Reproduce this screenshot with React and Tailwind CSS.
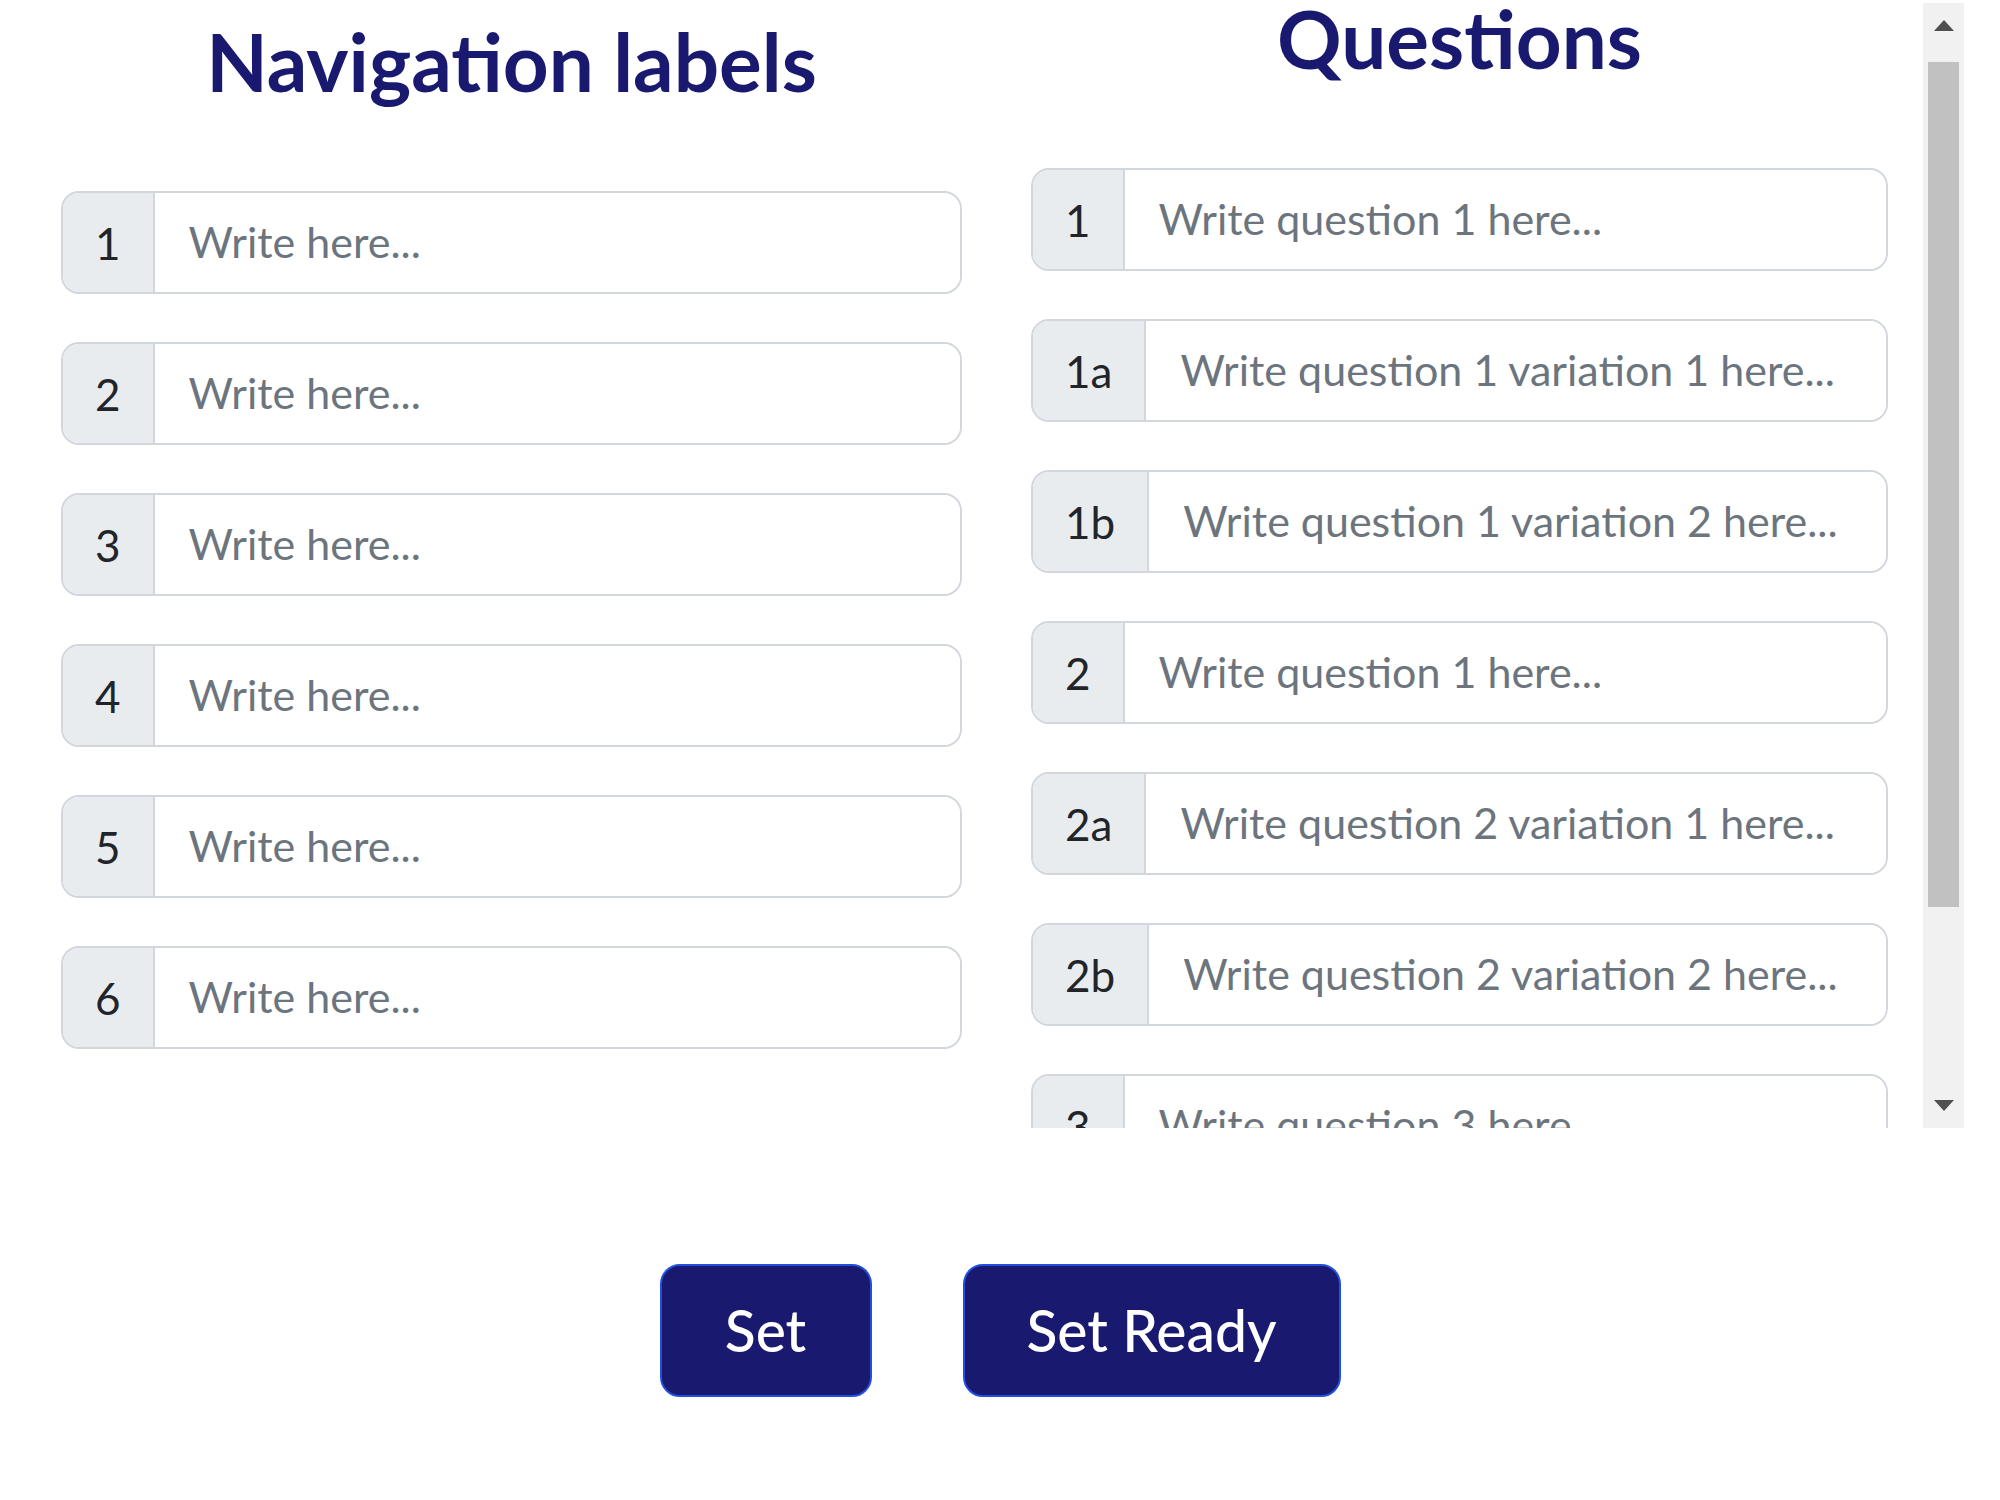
import React, { useEffect, useRef } from "react";

const NAV_ROWS = ["1", "2", "3", "4", "5", "6"];

const QUESTION_ROWS = [
  { label: "1", placeholder: "Write question 1 here..." },
  { label: "1a", placeholder: "Write question 1 variation 1 here..." },
  { label: "1b", placeholder: "Write question 1 variation 2 here..." },
  { label: "2", placeholder: "Write question 1 here..." },
  { label: "2a", placeholder: "Write question 2 variation 1 here..." },
  { label: "2b", placeholder: "Write question 2 variation 2 here..." },
  { label: "3", placeholder: "Write question 3 here..." },
  { label: "3a", placeholder: "Write question 3 variation 1 here..." },
  { label: "3b", placeholder: "Write question 3 variation 2 here..." },
];

function InputRow({ label, placeholder }) {
  return (
    <div className="flex h-[103px] shrink-0 overflow-hidden rounded-[18px] border-2 border-[#d2d7dd] bg-white">
      <span className="flex items-center border-r-2 border-[#d2d7dd] bg-[#e9ecef] px-[32px] text-[44px] text-[#212529]">
        {label}
      </span>
      <input
        type="text"
        placeholder={placeholder}
        className="min-w-0 flex-1 bg-white pl-[34px] pr-[20px] text-[43px] text-[#212529] outline-none placeholder:text-[#6c757d]"
      />
    </div>
  );
}

function Heading({ children }) {
  return (
    <h1 className="mb-[90px] mt-[21px] text-center text-[80px] font-bold leading-none text-[#191970]">
      {children}
    </h1>
  );
}

function Scrollbar() {
  return (
    <div className="flex h-full w-[41px] flex-col bg-[#f1f1f1]">
      <div className="flex h-[45px] shrink-0 items-center justify-center">
        <div className="h-0 w-0 border-x-[10px] border-b-[11px] border-x-transparent border-b-[#505050]" />
      </div>
      <div className="mx-[5px] mt-[14px] h-[845px] bg-[#c1c1c1]" />
      <div className="flex-1" />
      <div className="flex h-[45px] shrink-0 items-center justify-center">
        <div className="h-0 w-0 border-x-[10px] border-t-[11px] border-x-transparent border-t-[#505050]" />
      </div>
    </div>
  );
}

export default function App() {
  const scrollRef = useRef(null);

  useEffect(() => {
    if (scrollRef.current) scrollRef.current.scrollTop = 26;
  }, []);

  return (
    <div className="min-h-screen bg-white font-['Lato','Open_Sans',sans-serif]">
      <div className="flex items-start">
        {/* Navigation labels */}
        <section className="ml-[61px] w-[901px]">
          <Heading>Navigation labels</Heading>
          <div className="flex flex-col gap-[48px]">
            {NAV_ROWS.map((n) => (
              <InputRow key={n} label={n} placeholder="Write here..." />
            ))}
          </div>
        </section>

        {/* Questions, scrollable */}
        <div className="ml-[69px] mt-[3px] flex h-[1125px]">
          <div
            ref={scrollRef}
            className="w-[892px] overflow-y-scroll pr-[35px] [scrollbar-width:none]"
          >
            <Heading>Questions</Heading>
            <div className="flex flex-col gap-[48px] pb-[40px]">
              {QUESTION_ROWS.map((q) => (
                <InputRow key={q.label} label={q.label} placeholder={q.placeholder} />
              ))}
            </div>
          </div>
          <Scrollbar />
        </div>
      </div>

      <div className="mt-[136px] flex justify-center gap-[91px]">
        <button
          type="button"
          className="h-[133px] w-[212px] rounded-[20px] border-2 border-[#2150e0] bg-[#191970] text-[57px] font-medium text-white"
        >
          Set
        </button>
        <button
          type="button"
          className="h-[133px] w-[378px] rounded-[20px] border-2 border-[#2150e0] bg-[#191970] text-[57px] font-medium text-white"
        >
          Set Ready
        </button>
      </div>
    </div>
  );
}
